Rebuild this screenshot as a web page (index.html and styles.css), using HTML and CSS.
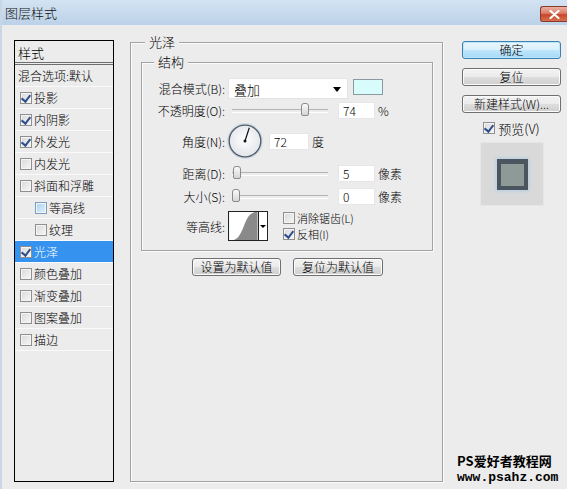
FILE: index.html
```html
<!DOCTYPE html>
<html lang="zh-CN">
<head>
<meta charset="utf-8">
<title>图层样式</title>
<link rel="stylesheet" href="styles.css">
</head>
<body>
<div class="window">
  <div class="titlebar">
    <span class="title">图层样式</span>
    <div class="close">
      <svg width="11" height="9" viewBox="0 0 11 9"><path d="M1.5 1 L9.5 8 M9.5 1 L1.5 8" stroke="#fff" stroke-width="2.2" stroke-linecap="round"/></svg>
    </div>
  </div>
  <div class="main">
    <div class="styles">
      <div class="st-head">样式</div>
      <div class="st-row plain">混合选项:默认</div>
      <div class="st-row"><span class="cb on"></span>投影</div>
      <div class="st-row"><span class="cb on"></span>内阴影</div>
      <div class="st-row"><span class="cb on"></span>外发光</div>
      <div class="st-row"><span class="cb"></span>内发光</div>
      <div class="st-row"><span class="cb"></span>斜面和浮雕</div>
      <div class="st-row sub"><span class="cb blue"></span>等高线</div>
      <div class="st-row sub"><span class="cb"></span>纹理</div>
      <div class="st-row sel"><span class="cb on"></span>光泽</div>
      <div class="st-row"><span class="cb"></span>颜色叠加</div>
      <div class="st-row"><span class="cb"></span>渐变叠加</div>
      <div class="st-row"><span class="cb"></span>图案叠加</div>
      <div class="st-row"><span class="cb"></span>描边</div>
    </div>

    <div class="group outer">
      <span class="legend">光泽</span>
      <div class="group inner">
        <span class="legend">结构</span>
        <div class="row r1">
          <span class="lbl">混合模式(B):</span>
          <div class="select"><span>叠加</span><i class="arrow"></i></div>
          <div class="swatch"></div>
        </div>
        <div class="row r2">
          <span class="lbl">不透明度(O):</span>
          <div class="slider"><i class="thumb" style="left:69px"></i></div>
          <div class="num">74</div>
          <span class="unit">%</span>
        </div>
        <div class="row r3">
          <span class="lbl">角度(N):</span>
          <svg class="dial" width="36" height="36" viewBox="0 0 36 36">
            <defs>
              <radialGradient id="dg" cx="50%" cy="45%" r="55%">
                <stop offset="0" stop-color="#ffffff"/>
                <stop offset="1" stop-color="#e2e4e8"/>
              </radialGradient>
            </defs>
            <circle cx="18" cy="18" r="17" fill="none" stroke="#c9d6e3" stroke-width="1.5"/>
            <circle cx="18" cy="18" r="15.8" fill="url(#dg)" stroke="#4f5b68" stroke-width="1.3"/>
            <line x1="18" y1="18" x2="22.3" y2="4.8" stroke="#111" stroke-width="1.2"/>
            <circle cx="18" cy="18" r="1.5" fill="#111"/>
          </svg>
          <div class="num wide">72</div>
          <span class="unit">度</span>
        </div>
        <div class="row r4">
          <span class="lbl">距离(D):</span>
          <div class="slider"><i class="thumb" style="left:1px"></i></div>
          <div class="num">5</div>
          <span class="unit">像素</span>
        </div>
        <div class="row r5">
          <span class="lbl">大小(S):</span>
          <div class="slider"><i class="thumb" style="left:0px"></i></div>
          <div class="num">0</div>
          <span class="unit">像素</span>
        </div>
        <div class="row r6">
          <span class="lbl">等高线:</span>
          <div class="contour">
            <svg class="curve" width="30" height="30" viewBox="0 0 30 30">
              <rect width="30" height="30" fill="#fff"/>
              <path d="M4 30 C 12 29, 15 14, 19 7 C 21 3, 24 1, 27 0 L30 0 L30 30 Z" fill="#8a8a8a"/>
            </svg>
            <div class="cdrop"><i class="arrow small"></i></div>
          </div>
          <div class="checks">
            <div class="chk"><span class="cb"></span>消除锯齿(L)</div>
            <div class="chk"><span class="cb on"></span>反相(I)</div>
          </div>
        </div>
      </div>
      <div class="defaults">
        <div class="btn dbtn1">设置为默认值</div>
        <div class="btn dbtn2">复位为默认值</div>
      </div>
    </div>

    <div class="side">
      <div class="btn side-btn default">确定</div>
      <div class="btn side-btn">复位</div>
      <div class="btn side-btn">新建样式(W)...</div>
      <div class="preview-chk"><span class="cb on"></span>预览(V)</div>
      <div class="preview"><div class="pv-square"></div></div>
    </div>
  </div>
  <div class="watermark">
    <div class="wm1">PS爱好者教程网</div>
    <div class="wm2">www.psahz.com</div>
  </div>
</div>
</body>
</html>
```
FILE: styles.css
```css
* { box-sizing: border-box; }
html, body { margin: 0; padding: 0; }
body {
  width: 567px;
  height: 489px;
  overflow: hidden;
  background: #ececec;
  font-family: "Noto Sans CJK SC", "Noto Sans", sans-serif;
  font-size: 12px;
  font-weight: 300;
  color: #000;
}
.window {
  position: relative;
  width: 567px;
  height: 489px;
  display: flex;
  flex-direction: column;
  background: #ececec;
  border-left: 2px solid #c8d6e5;
}
.titlebar {
  height: 25px;
  flex-shrink: 0;
  display: flex;
  justify-content: space-between;
  align-items: flex-start;
  padding-left: 3px;
  background: linear-gradient(#d3e3f3, #bcd2e8);
}
.title {
  font-size: 13px;
  line-height: 26px;
  color: #111;
}
.close {
  margin-top: 6px;
  width: 27px;
  height: 16px;
  border: 1px solid #8a3a2a;
  border-right: none;
  border-radius: 3px 0 0 3px;
  background: linear-gradient(#eab2a4 0%, #db7d66 45%, #c8452b 55%, #d9704f 100%);
  display: flex;
  align-items: center;
  justify-content: center;
}

.main {
  flex: 1;
  display: flex;
  padding: 15px 0 7px 12px;
}

/* left styles list */
.styles {
  width: 100px;
  flex-shrink: 0;
  border: 1px solid #000;
  background: #ececec;
}
.st-head {
  height: 24px;
  line-height: 23px;
  padding-left: 3px;
  font-size: 13px;
  border-bottom: 3px double #6e6e6e;
}
.st-row {
  height: 22px;
  display: flex;
  align-items: center;
  padding-left: 5px;
  border-bottom: 1px solid #fafafa;
  white-space: nowrap;
}
.st-row.plain { padding-left: 3px; }
.st-row.sub { padding-left: 20px; }
.st-row.sel { background: #3592ee; color: #fff; }
.st-row .cb { margin-right: 2px; }

.cb {
  display: inline-block;
  flex-shrink: 0;
  width: 12px;
  height: 12px;
  border: 1px solid #8f8f8f;
  background: linear-gradient(135deg, #d8d8d8, #f7f7f7);
  box-shadow: inset 0 0 0 1px #f4f4f4;
  position: relative;
}
.cb.blue {
  border-color: #7e9cbd;
  background: linear-gradient(135deg, #a9d3f2, #dff0fb);
}
.cb.on::after {
  content: "";
  position: absolute;
  left: 2px;
  top: 0px;
  width: 4px;
  height: 7px;
  border: solid #2e4f8e;
  border-width: 0 2px 2px 0;
  transform: rotate(38deg);
}

/* group boxes */
.group {
  position: relative;
  border: 1px solid #a2a2a2;
  box-shadow: inset 1px 1px 0 #fbfbfb, 1px 1px 0 #fbfbfb;
}
.legend {
  position: absolute;
  top: -9px;
  left: 13px;
  padding: 0 4px;
  line-height: 16px;
  font-size: 13px;
  background: #ececec;
}
.outer {
  width: 313px;
  margin-left: 16px;
  margin-top: 2px;
  padding: 19px 9px 0 10px;
  flex-shrink: 0;
}
.outer > .legend { left: 14px; }
.inner {
  width: 292px;
  height: 189px;
  padding-top: 14px;
}
.inner > .legend { left: 12px; }

.row {
  display: flex;
  align-items: center;
  height: 22px;
}
.r3 { height: 40px; }
.r4 { height: 24px; }
.r6 { height: 30px; margin-top: 4px; }
.lbl {
  width: 83px;
  margin-right: 3px;
  text-align: right;
  white-space: nowrap;
  flex-shrink: 0;
}
.select {
  width: 120px;
  height: 21px;
  background: #fff;
  border: 1px solid #e4e4e4;
  display: flex;
  align-items: center;
  justify-content: space-between;
  padding: 2px 6px 0 5px;
  font-size: 13px;
}
.arrow {
  width: 0;
  height: 0;
  border-left: 4px solid transparent;
  border-right: 4px solid transparent;
  border-top: 5px solid #000;
}
.arrow.small {
  border-left-width: 3px;
  border-right-width: 3px;
  border-top-width: 3px;
}
.swatch {
  width: 30px;
  height: 16px;
  margin-left: 5px;
  margin-top: -2px;
  background: #d8fbfb;
  border: 1px solid #8d9aa0;
}
.slider {
  position: relative;
  width: 96px;
  height: 14px;
  margin-left: 4px;
}
.slider::before {
  content: "";
  position: absolute;
  left: 0;
  right: 0;
  top: 6px;
  height: 2px;
  border-top: 1px solid #b4b4b4;
  border-bottom: 1px solid #fff;
}
.thumb {
  position: absolute;
  top: 0;
  width: 8px;
  height: 13px;
  border: 1px solid #8a8a8a;
  border-radius: 3px 3px 2px 2px;
  background: linear-gradient(#fafafa, #d6d6d6);
}
.num {
  width: 37px;
  height: 17px;
  margin-left: 10px;
  padding-left: 4px;
  background: #fff;
  border: 1px solid #e6e6ea;
  line-height: 15px;
  font-size: 12px;
}
.num.wide {
  width: 40px;
  margin-left: 6px;
}
.unit { margin-left: 3px; font-size: 12px; }
.dial { display: block; margin-left: -1px; }

.contour {
  display: flex;
  width: 40px;
  height: 30px;
  border: 1px solid #222;
}
.curve { display: block; width: 29px; height: 28px; }
.cdrop {
  flex: 1;
  border-left: 1px solid #222;
  background: #fff;
  display: flex;
  align-items: center;
  justify-content: center;
}
.checks {
  margin-left: 15px;
  display: flex;
  flex-direction: column;
}
.chk {
  height: 16px;
  display: flex;
  align-items: center;
  white-space: nowrap;
  font-size: 11px;
}
.chk .cb { margin-right: 2px; }

.defaults {
  display: flex;
  justify-content: center;
  gap: 12px;
  margin-top: 7px;
  margin-left: 1px;
}

/* buttons */
.btn {
  height: 18px;
  border: 1px solid #707070;
  border-radius: 3px;
  background: linear-gradient(#f3f3f3 0%, #ebebeb 48%, #dddddd 52%, #cfcfcf 100%);
  box-shadow: inset 0 0 0 1px #fbfbfb;
  text-align: center;
  line-height: 16px;
  font-size: 12px;
  white-space: nowrap;
}
.dbtn1 { width: 89px; }
.dbtn2 { width: 90px; }
.side {
  width: 99px;
  margin-left: 19px;
  margin-top: 1px;
  display: flex;
  flex-direction: column;
  align-items: center;
}
.side-btn { width: 99px; margin-bottom: 9px; }
.side-btn.default {
  border-color: #3c7fb1;
  background: linear-gradient(#eaf6fd 0%, #d9f0fc 48%, #bee6fd 52%, #a7d9f5 100%);
  box-shadow: inset 0 0 0 1px #b9e7f9;
}
.preview-chk {
  display: flex;
  align-items: center;
  height: 18px;
  margin-top: -3px;
  font-size: 13px;
}
.preview-chk .cb { margin-right: 3px; }
.preview {
  margin-top: 5px;
  width: 64px;
  height: 64px;
  background: #d9d9d9;
  border: 1px solid #e6e6e6;
  display: flex;
  align-items: center;
  justify-content: center;
}
.pv-square {
  width: 31px;
  height: 31px;
  margin-left: 2px;
  border: 4px solid #4a5560;
  border-top-width: 5px;
  background: #8e9a97;
  box-shadow: 0 0 3px 1px #b2cde6;
}

.watermark {
  position: absolute;
  left: 455px;
  top: 451px;
  font-weight: bold;
  color: #000;
}
.wm1 {
  font-size: 13px;
  line-height: 19px;
  font-family: "Noto Sans CJK SC", sans-serif;
}
.wm2 {
  font-family: "Liberation Mono", monospace;
  font-size: 13px;
  line-height: 15px;
}
```
